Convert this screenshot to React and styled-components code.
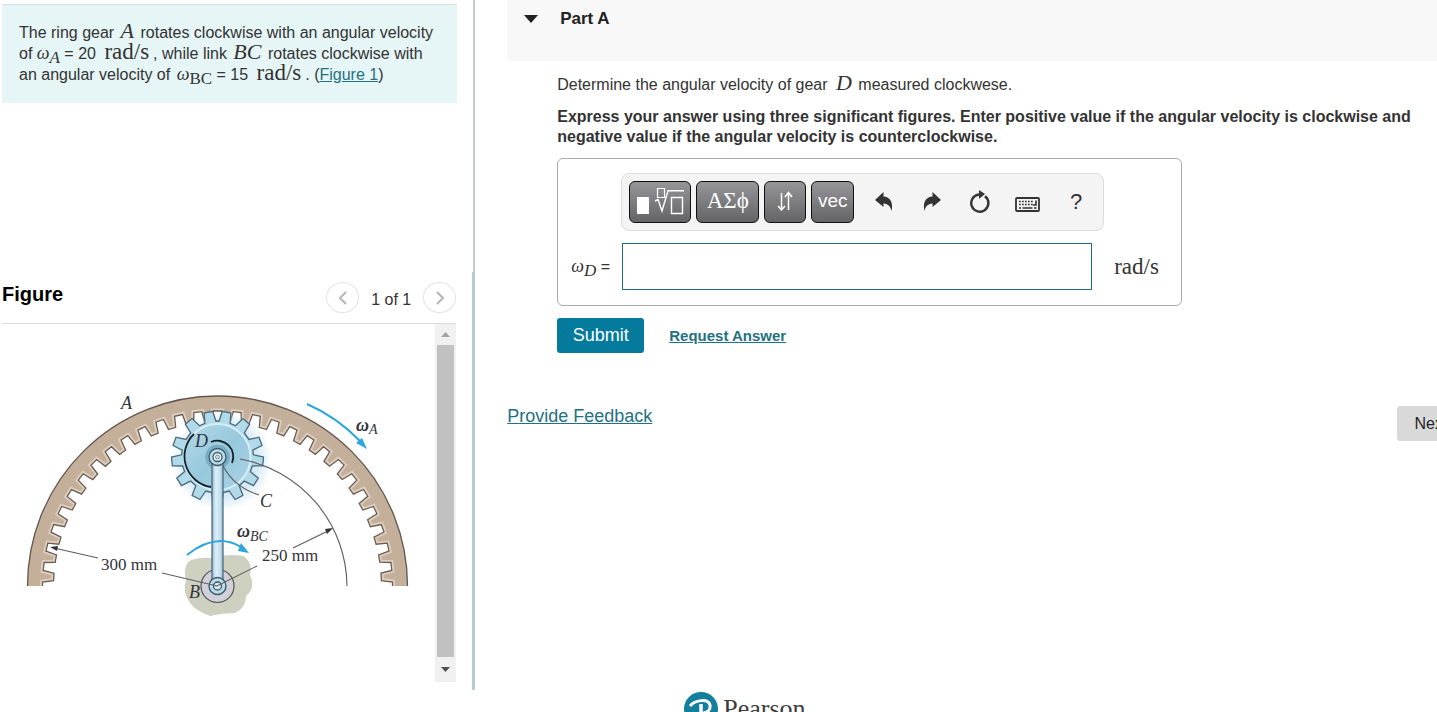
import React from "react";
import styled, { createGlobalStyle } from "styled-components";

const SANS = '"Liberation Sans", Arial, sans-serif';
const SERIF = '"Liberation Serif", "Times New Roman", serif';

const GlobalStyle = createGlobalStyle`
  * { box-sizing: border-box; }
  body {
    margin: 0;
    background: #fff;
    color: #333;
    font-family: ${SANS};
    font-size: 16px;
    line-height: 20px;
  }
  button, input { font-family: inherit; }
`;

const Page = styled.div`
  display: flex;
  align-items: flex-start;
  height: 100vh;
  overflow: hidden;
`;

/* ---------- left column ---------- */

const Side = styled.aside`
  flex: 0 0 calc(33% + 1px);
  display: flex;
  flex-direction: column;
`;

const ProblemPane = styled.section`
  min-height: 272px;
  padding: 4px 16px 0 2px;
  border-right: 2px solid #c3c8cd;
`;

const ProblemText = styled.p`
  margin: 0;
  padding: 17px 0 18px 17px;
  border-top: 1px solid #d3e3e4;
  background: #e6f5f6;
  line-height: 21px;
`;

const MathText = styled.span`
  font-family: ${SERIF};
  font-size: ${(p) => p.$size || 22}px;
  font-style: ${(p) => (p.$upright ? "normal" : "italic")};
  line-height: 1px;
  margin: 0 ${(p) => p.$after || 0}px 0 ${(p) => p.$before || 0}px;
`;

const Sub = styled.sub`
  font-size: 17px;
  line-height: 1px;
  vertical-align: -4px;
  font-style: ${(p) => (p.$upright ? "normal" : "italic")};
`;

const TextLink = styled.a`
  color: #1f7183;
  font-size: ${(p) => p.$size || 16}px;
  font-weight: ${(p) => (p.$bold ? 700 : 400)};
`;

const FigurePane = styled.section`
  padding: 0 16px 8px 2px;
  border-right: 3px solid #b9cad5;
`;

const FigureHeader = styled.header`
  display: flex;
  align-items: center;
  justify-content: space-between;
  height: 52px;
  border-bottom: 1px solid #ddd;
`;

const FigureTitle = styled.h2`
  margin: 0 0 8px;
  color: #000;
  font-size: 20px;
  line-height: 24px;
`;

const Pager = styled.nav`
  display: flex;
  align-items: center;
  gap: 12px;
`;

const PagerCount = styled.span`
  padding-top: 4px;
`;

const RoundButton = styled.button`
  display: grid;
  place-items: center;
  width: 33px;
  height: 31px;
  padding: 0;
  border: 1px solid #e3e3e3;
  border-radius: 50%;
  background: #fff;
  color: #b5b5b5;
`;

const FigureView = styled.div`
  display: flex;
  justify-content: space-between;
  height: 358px;
`;

const Drawing = styled.svg`
  flex: none;
  width: 420px;
  height: 358px;
  font-family: ${SERIF};
  font-size: 18px;
  fill: #33333b;
`;

const ScrollTrack = styled.div`
  display: flex;
  flex-direction: column;
  align-items: center;
  justify-content: space-between;
  width: 21px;
  background: #f1f1f1;
`;

const ScrollArrow = styled.button`
  display: grid;
  place-items: center;
  width: 21px;
  height: ${(p) => (p.$end ? 25 : 21)}px;
  padding: 0;
  border: 0;
  background: transparent;
  color: ${(p) => (p.$end ? "#505050" : "#a3a3a3")};
`;

const ScrollThumb = styled.div`
  flex: 1;
  width: 17px;
  background: #c1c1c1;
`;

/* ---------- right column ---------- */

const Main = styled.main`
  flex: 1;
  min-width: 0;
  padding-left: 32px;
`;

const PartHeader = styled.header`
  display: flex;
  align-items: flex-start;
  height: 61px;
  padding: 9px 0 0 17px;
  background: #f8f8f8;
`;

const ToggleButton = styled.button`
  width: 36px;
  height: 20px;
  padding: 0 0 2px;
  border: 0;
  background: transparent;
  text-align: left;
`;

const PartTitle = styled.h1`
  margin: 0;
  color: #222;
  font-size: 17px;
  line-height: 20px;
`;

const PartBody = styled.div`
  padding: 14px 8px 0 50px;
`;

const Question = styled.p`
  margin: 0 0 12px;
`;

const Instruction = styled.p`
  margin: 0 0 11px;
  font-weight: 700;
`;

const AnswerBox = styled.form`
  width: 625px;
  padding: 14px 0 15px 13px;
  border: 1px solid #aaa;
  border-radius: 6px;
`;

const Toolbar = styled.div`
  display: flex;
  align-items: center;
  gap: 5px;
  width: 483px;
  height: 58px;
  margin: 0 0 12px 50px;
  padding-left: 7px;
  border: 1px solid #ddd;
  border-radius: 8px;
  background: #f4f4f4;
`;

const PaletteButton = styled.button`
  display: grid;
  place-items: center;
  width: ${(p) => p.$width}px;
  height: 42px;
  padding: 0 0 3px;
  border: 1px solid #111;
  border-radius: 6px;
  background: linear-gradient(#96959a, #646466);
  color: #fff;
  font-family: ${(p) => (p.$serif ? SERIF : SANS)};
  font-size: ${(p) => (p.$serif ? 23 : 19)}px;
`;

const IconGroup = styled.div`
  display: flex;
  padding-left: 1px;
`;

const IconButton = styled.button`
  display: grid;
  place-items: center;
  width: 48px;
  height: 42px;
  padding: 0;
  border: 0;
  background: transparent;
  color: #333;
  font-size: 22px;
`;

const AnswerRow = styled.div`
  display: flex;
  align-items: center;
`;

const AnswerLabel = styled.label`
  width: 51px;
`;

const AnswerInput = styled.input`
  width: 470px;
  height: 47px;
  padding: 0 10px;
  border: 1px solid #1c6a7c;
  font-size: 18px;
`;

const Actions = styled.div`
  display: flex;
  align-items: center;
  gap: 25px;
  margin-top: 12px;
`;

const SolidButton = styled.button`
  flex: none;
  width: ${(p) => (p.$muted ? 68 : 87)}px;
  height: 35px;
  padding: 0;
  border: 0;
  border-radius: 3px;
  background: ${(p) => (p.$muted ? "#d9d9d9" : "#047a9c")};
  color: ${(p) => (p.$muted ? "#252525" : "#fff")};
  font-size: ${(p) => (p.$muted ? 16 : 18)}px;
`;

/* The Next button runs past the right edge of the window. */
const PageNav = styled.div`
  display: flex;
  justify-content: space-between;
  margin: 53px -28px 0 0;
`;

const Footer = styled.footer`
  display: flex;
  align-items: center;
  gap: 5px;
  margin: 251px 0 0 177px;
  color: #3c3c3c;
  font-family: ${SERIF};
  font-size: 26px;
`;

/* ---------- figure geometry ---------- */

const BX = 217.5;
const BY = 586;

const polar = (cx, cy, r, deg) => {
  const a = (deg * Math.PI) / 180;
  return `${(cx + r * Math.cos(a)).toFixed(1)} ${(cy - r * Math.sin(a)).toFixed(1)}`;
};

const ringInner = () => {
  const pts = [polar(BX, BY, 175, 0)];
  for (let k = 0; k < 28; k += 1) {
    const c = 3.2 + k * 6.43;
    pts.push(
      polar(BX, BY, 175, c - 1.9),
      polar(BX, BY, 164, c - 1.3),
      polar(BX, BY, 164, c + 1.3),
      polar(BX, BY, 175, c + 1.9)
    );
  }
  pts.push(polar(BX, BY, 175, 180));
  return pts;
};

const INNER = ringInner();
const RING = `M27.500 586A190 190 0 0 1 407.500 586L${INNER.join("L")}Z`;
const RING_EDGE = `M${INNER.join("L")}`;

const PINION_TEETH = [11.5, 39, 70, 95.5, 123, 152, 180, 208, 237, 264.5, 290, 321, 348.5];
const PINION = `M${PINION_TEETH.map((t) => {
  const c = 90 - t;
  return [
    polar(217.5, 457, 36, c + 9),
    polar(217.5, 457, 46, c + 5.5),
    polar(217.5, 457, 46, c - 5.5),
    polar(217.5, 457, 36, c - 9),
  ].join("L");
}).join("L")}Z`;

function GearFigure() {
  return (
    <Drawing viewBox="2 324 420 358" role="img" aria-label="Ring gear A, gear D and link BC">
      <defs>
        <linearGradient id="link" x1="0" x2="1">
          <stop offset="0" stopColor="#8fb6ca" />
          <stop offset="0.35" stopColor="#dcf0f9" />
          <stop offset="0.75" stopColor="#c2e1ef" />
          <stop offset="1" stopColor="#8fb6ca" />
        </linearGradient>
        <linearGradient id="disc" x1="0" y1="0" x2="1" y2="1">
          <stop offset="0" stopColor="#b4dae8" />
          <stop offset="0.5" stopColor="#97c8dc" />
          <stop offset="1" stopColor="#a8d2e3" />
        </linearGradient>
        <radialGradient id="glow">
          <stop offset="0.7" stopColor="#d3e9f4" />
          <stop offset="1" stopColor="#d3e9f4" stopOpacity="0" />
        </radialGradient>
        <clipPath id="ring-shape">
          <path d={RING} />
        </clipPath>
      </defs>

      <path d={RING} fill="#c4af9b" />
      <path d={RING_EDGE} fill="none" stroke="#ddcfc0" strokeWidth="5" clipPath="url(#ring-shape)" />
      <path d={RING_EDGE} fill="none" stroke="#6b5d52" strokeWidth="1.3" />
      <path d="M27.500 586A190 190 0 0 1 407.500 586" fill="none" stroke="#61574f" strokeWidth="1.3" />

      <circle cx="222" cy="461" r="50" fill="url(#glow)" />
      <path d={PINION} fill="#b0d9ea" stroke="#4a6b7c" strokeWidth="1.3" />
      <circle cx="217.5" cy="457" r="33" fill="url(#disc)" stroke="#d8eef6" strokeWidth="2" />
      <path d="M194 434A31 31 0 0 0 211 487" fill="none" stroke="#14222b" strokeWidth="1.8" />
      <path d="M211 442A16 16 0 0 1 232 463" fill="none" stroke="#14222b" strokeWidth="1.8" />
      <circle cx="217.5" cy="457" r="13" fill="#79adc5" stroke="#a9d0e0" />

      <path d="M188 562Q196 557 210 558Q228 553 243 556Q253 562 250 575Q256 588 246 596Q246 608 235 613Q222 613 210 616Q196 611 190 603Q182 592 186 580Q183 570 188 562Z" fill="#ced0c0" />
      <circle cx="217.5" cy="586" r="16.5" fill="#cfd0d8" stroke="#555" strokeWidth="1.2" />
      <path d="M212 458V586H223V458Z" fill="url(#link)" stroke="#4b6676" strokeWidth="1.2" />
      <g stroke="#3d5868" strokeWidth="1.3">
        <circle cx="217.5" cy="457" r="8.500" fill="#b9dbe9" />
        <circle cx="217.5" cy="457" r="4.500" fill="#eef6fa" />
        <circle cx="217.5" cy="457" r="2" fill="#c9dfe9" strokeWidth="0.6" />
        <circle cx="217.5" cy="586" r="8.500" fill="#b9dbe9" />
        <circle cx="217.5" cy="586" r="4" fill="#d8e8ef" />
      </g>

      <g fill="none" stroke="#5c5c60" strokeWidth="1.1">
        <path d="M240 459A130 130 0 0 1 347 586" />
        <path d="M223 466Q234 487 259 495" />
        <path d="M54 548L98 558M162 573L217 586L257 566M293 548L330 530" />
      </g>
      <path d="M50 547L58 546L57 551ZM333 528L327 534L325 529Z" fill="#333" />

      <g fill="none" stroke="#2da5de" strokeWidth="2">
        <path d="M307 404Q337 417 361 442" />
        <path d="M187 555Q216 532 241 547" />
      </g>
      <path d="M367 449L356 443L362 438ZM249 553L238 551L241 543Z" fill="#2da5de" />

      <g fontStyle="italic">
        <text x="121" y="409">A</text>
        <text x="356" y="431" fontWeight="bold">ω</text>
        <text x="369" y="434" fontSize="14">A</text>
        <text x="195" y="447">D</text>
        <text x="260" y="507">C</text>
        <text x="237" y="537" fontWeight="bold">ω</text>
        <text x="250" y="541" fontSize="14">BC</text>
        <text x="189" y="598">B</text>
      </g>
      <text x="101" y="570" fontSize="17">300 mm</text>
      <text x="262" y="561" fontSize="17">250 mm</text>
    </Drawing>
  );
}

/* ---------- icons ---------- */

const Chevron = ({ right }) => (
  <svg width="10" height="14" viewBox="0 0 10 14" fill="none" stroke="currentColor" strokeWidth="2">
    <path d={right ? "M2 1L8 7L2 13" : "M8 1L2 7L8 13"} />
  </svg>
);

const Triangle = ({ up }) => (
  <svg width="9" height="5" viewBox="0 0 9 5" fill="currentColor">
    <path d={up ? "M0 5L4.500 0L9 5Z" : "M0 0L4.500 5L9 0Z"} />
  </svg>
);

const RootIcon = () => (
  <svg width="48" height="28" viewBox="0 0 48 28" fill="none" stroke="#fff">
    <path d="M1 10H13V27H1Z" fill="#fff" stroke="none" />
    <path d="M21.500 1.500H28.500V10.500H21.500Z" strokeWidth="1.2" />
    <path d="M19 14L22 12.500L26 24L32 3.800H48" strokeWidth="1.4" />
    <path d="M35.500 10.500H46.500V26.500H35.500Z" strokeWidth="1.4" />
  </svg>
);

const ArrowsIcon = () => (
  <svg width="16" height="20" viewBox="0 0 16 20" fill="none" stroke="#fff" strokeWidth="1.5">
    <path d="M4.500 2V19M1 15L4.500 19L8 15M11.500 19V2M8 6L11.500 1.500L15 6" />
  </svg>
);

const CurvedArrow = ({ flip }) => (
  <svg width="18" height="20" viewBox="0 0 18 20" fill="currentColor">
    <path
      d={
        flip
          ? "M18 8L9.500 0V4.500C3 5 -0.500 10 1.500 19C2.500 14.500 4.500 12 9.500 11.500V15Z"
          : "M0 8L8.500 0V4.500C15 5 18.500 10 16.500 19C15.500 14.500 13.500 12 8.500 11.500V15Z"
      }
    />
  </svg>
);

const ResetIcon = () => (
  <svg width="22" height="24" viewBox="0 0 22 24">
    <path d="M16 6.200A8.600 8.600 0 1 1 10 4.500" fill="none" stroke="currentColor" strokeWidth="2.400" />
    <path d="M10 0L16 4L10 9Z" fill="currentColor" />
  </svg>
);

const KeyboardIcon = () => (
  <svg width="26" height="22" viewBox="0 0 26 22" fill="none" stroke="currentColor">
    <rect x="1" y="7" width="23" height="13" rx="1" strokeWidth="1.800" />
    <path d="M4 10.500H19M4 13.500H19" strokeWidth="1.600" strokeDasharray="1.700 1.300" />
    <path d="M21 9.500V14H18" strokeWidth="1.600" />
    <path d="M4 17H6M7.500 17H17.500M19 17H21.500" strokeWidth="1.600" />
  </svg>
);

const PearsonMark = () => (
  <svg width="34" height="34" viewBox="0 0 34 34">
    <circle cx="17" cy="17" r="17" fill="#12809c" />
    <path d="M6 14C11 8 24 6 26 13C27 19 22 21 19 21" fill="none" stroke="#fff" strokeWidth="3" />
    <path d="M17 12V28" stroke="#fff" strokeWidth="3.500" />
  </svg>
);

export default function App() {
  return (
    <>
      <GlobalStyle />
      <Page>
        <Side>
          <ProblemPane>
            <ProblemText>
              The ring gear <MathText $before={2} $after={2}>A</MathText> rotates clockwise with an angular velocity
              <br />
              of <MathText $size={18}>ω</MathText>
              <MathText><Sub>A</Sub></MathText> = 20 <MathText $upright $size={23} $before={4} $after={4}>rad/s</MathText>,
              while link <MathText $before={2} $after={2}>BC</MathText> rotates clockwise with
              <br />
              an angular velocity of <MathText $size={18} $before={2}>ω</MathText>
              <MathText $upright><Sub $upright>BC</Sub></MathText> = 15{" "}
              <MathText $upright $size={23} $before={4} $after={4}>rad/s</MathText>. (<TextLink href="#figure">Figure 1</TextLink>)
            </ProblemText>
          </ProblemPane>
          <FigurePane id="figure">
            <FigureHeader>
              <FigureTitle>Figure</FigureTitle>
              <Pager aria-label="Figures">
                <RoundButton type="button" aria-label="Previous figure"><Chevron /></RoundButton>
                <PagerCount>1 of 1</PagerCount>
                <RoundButton type="button" aria-label="Next figure"><Chevron right /></RoundButton>
              </Pager>
            </FigureHeader>
            <FigureView>
              <GearFigure />
              <ScrollTrack>
                <ScrollArrow type="button" aria-label="Scroll up"><Triangle up /></ScrollArrow>
                <ScrollThumb />
                <ScrollArrow type="button" aria-label="Scroll down" $end><Triangle /></ScrollArrow>
              </ScrollTrack>
            </FigureView>
          </FigurePane>
        </Side>

        <Main>
          <PartHeader>
            <ToggleButton type="button" aria-label="Collapse Part A">
              <svg width="14" height="8" viewBox="0 0 14 8" fill="#222"><path d="M0 0H14L7 8Z" /></svg>
            </ToggleButton>
            <PartTitle>Part A</PartTitle>
          </PartHeader>
          <PartBody>
            <Question>
              Determine the angular velocity of gear <MathText $before={4} $after={2}>D</MathText> measured clockwese.
            </Question>
            <Instruction>
              Express your answer using three significant figures. Enter positive value if the angular velocity is
              clockwise and negative value if the angular velocity is counterclockwise.
            </Instruction>
            <AnswerBox onSubmit={(e) => e.preventDefault()}>
              <Toolbar role="toolbar" aria-label="Math input">
                <PaletteButton type="button" $width={62} aria-label="Templates"><RootIcon /></PaletteButton>
                <PaletteButton type="button" $width={63} $serif>ΑΣϕ</PaletteButton>
                <PaletteButton type="button" $width={42} aria-label="Arrows"><ArrowsIcon /></PaletteButton>
                <PaletteButton type="button" $width={43}>vec</PaletteButton>
                <IconGroup>
                  <IconButton type="button" aria-label="Undo"><CurvedArrow /></IconButton>
                  <IconButton type="button" aria-label="Redo"><CurvedArrow flip /></IconButton>
                  <IconButton type="button" aria-label="Reset"><ResetIcon /></IconButton>
                  <IconButton type="button" aria-label="Keyboard"><KeyboardIcon /></IconButton>
                  <IconButton type="button">?</IconButton>
                </IconGroup>
              </Toolbar>
              <AnswerRow>
                <AnswerLabel htmlFor="omega-d">
                  <MathText $size={18}>ω</MathText>
                  <MathText><Sub>D</Sub></MathText> =
                </AnswerLabel>
                <AnswerInput id="omega-d" type="text" />
                <MathText $upright $size={23} $before={22}>rad/s</MathText>
              </AnswerRow>
            </AnswerBox>
            <Actions>
              <SolidButton type="button">Submit</SolidButton>
              <TextLink href="#answer" $bold $size={15}>Request Answer</TextLink>
            </Actions>
          </PartBody>
          <PageNav>
            <TextLink href="#feedback" $size={18}>Provide Feedback</TextLink>
            <SolidButton type="button" $muted>Next</SolidButton>
          </PageNav>
          <Footer>
            <PearsonMark />
            Pearson
          </Footer>
        </Main>
      </Page>
    </>
  );
}
